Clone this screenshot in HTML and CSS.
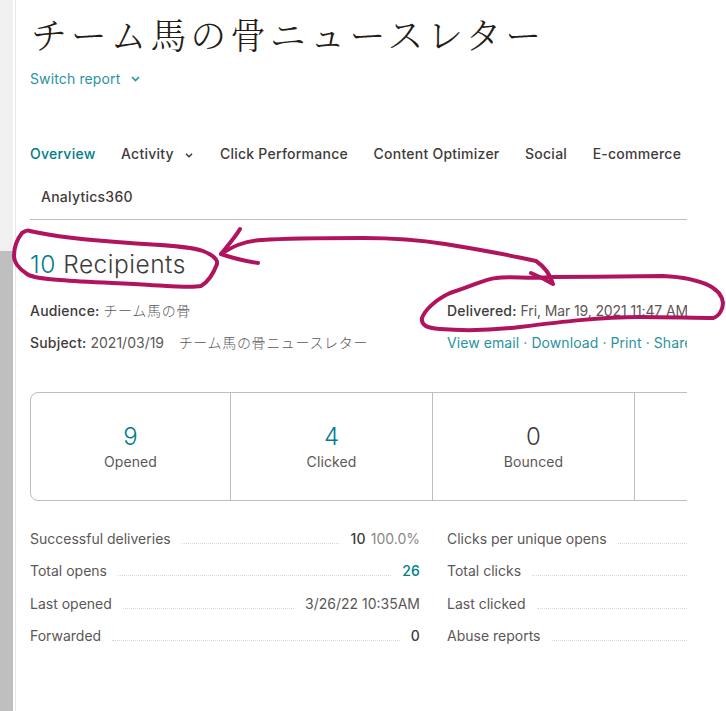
FILE: index.html
```html
<!DOCTYPE html>
<html lang="ja">
<head>
<meta charset="utf-8">
<title>Report</title>
<link rel="stylesheet" href="styles.css">
</head>
<body>
<div class="page">
  <aside class="rail"><div class="rail-top"></div><div class="rail-bottom"></div></aside>
  <main class="main">
    <h1 class="title">チーム馬の骨ニュースレター</h1>
    <a class="switch">Switch report
      <svg class="chev" width="9" height="6" viewBox="0 0 9 6"><path d="M1 1l3.5 3.5L8 1" fill="none" stroke="currentColor" stroke-width="1.7"/></svg>
    </a>
    <nav class="tabs">
      <a class="tab active">Overview</a>
      <a class="tab tab-menu">Activity <svg class="chev-s" width="8" height="5" viewBox="0 0 8 5"><path d="M1 .8l3 3 3-3" fill="none" stroke="currentColor" stroke-width="1.5"/></svg></a>
      <a class="tab">Click Performance</a>
      <a class="tab">Content Optimizer</a>
      <a class="tab">Social</a>
      <a class="tab tab-end">E-commerce</a>
      <a class="tab tab-wrap">Analytics360</a>
    </nav>
    <h2 class="recipients"><span class="teal">10</span> Recipients</h2>
    <div class="meta">
      <div class="meta-row">
        <p><b>Audience:</b> <span class="jp">チーム馬の骨</span></p>
        <p class="meta-right"><b>Delivered:</b> <span class="date">Fri, Mar 19, 2021 11:47 AM</span></p>
      </div>
      <div class="meta-row">
        <p><b>Subject:</b> 2021/03/19<span class="jp">　チーム馬の骨ニュースレター</span></p>
        <p class="meta-right links"><a>View email</a> · <a>Download</a> · <a>Print</a> · <a>Share</a></p>
      </div>
    </div>
    <section class="stats">
      <div class="stat"><strong class="teal">9</strong><span>Opened</span></div>
      <div class="stat"><strong class="teal">4</strong><span>Clicked</span></div>
      <div class="stat"><strong>0</strong><span>Bounced</span></div>
      <div class="stat"></div>
    </section>
    <section class="details">
      <div class="col">
        <div class="row"><span>Successful deliveries</span><i></i><b>10</b><em>100.0%</em></div>
        <div class="row"><span>Total opens</span><i></i><b class="teal">26</b></div>
        <div class="row"><span>Last opened</span><i></i><span>3/26/22 10:35AM</span></div>
        <div class="row"><span>Forwarded</span><i></i><b>0</b></div>
      </div>
      <div class="col col-right">
        <div class="row"><span>Clicks per unique opens</span><i></i></div>
        <div class="row"><span>Total clicks</span><i></i></div>
        <div class="row"><span>Last clicked</span><i></i></div>
        <div class="row"><span>Abuse reports</span><i></i></div>
      </div>
    </section>
  </main>
  <svg class="ink" width="726" height="711" viewBox="0 0 726 711" fill="none" stroke="#b0145f" stroke-width="4" stroke-linecap="round" stroke-linejoin="round">
    <path d="M30 231C60 238 100 241 130 243C160 245 190 246 203 251C213 255 218 259 217 264C214 272 208 282 201 286C190 288 170 286 150 285C115 283 85 282 60 280C45 279 33 278 27 274C19 269 14 262 14 256C14 247 18 238 22 233C25 231 28 230 30 231Z"/>
    <path d="M240 229C236 236 230 243 221 254C232 258 246 261 258 263"/>
    <path d="M221 254C232 247 243 241 262 240C290 238 330 238 363 238C390 238 420 240 445 244C470 248 495 252 536 261C545 267 550 274 553 284C546 280 538 276 531 273"/>
    <path d="M553 277C530 279 510 276 496 278C485 279 475 285 450 293C435 300 425 310 422 318C421 325 426 328 440 329C465 331 495 330 520 327C560 322 600 317 640 317C665 317 695 318 713 318C720 316 723 308 723 303C722 295 718 291 710 286C700 281 685 277 663 276C625 276 590 277 553 277Z"/>
  </svg>
</div>
</body>
</html>
```

FILE: styles.css
```css
* { box-sizing: border-box; }
html, body { margin: 0; padding: 0; background: #fff; }
body { font-family: "Inter", "Noto Sans CJK JP", sans-serif; color: #403b3b; font-size: 14px; overflow: hidden; }
p, h1, h2 { margin: 0; font-weight: 400; }
.page { display: flex; width: 726px; height: 711px; overflow: hidden; position: relative; }
.rail { width: 16px; flex: none; display: flex; flex-direction: column; border-right: 1px solid #e6e6e6; padding-right: 2px; }
.rail-top { height: 251px; background: #f0f0f0; }
.rail-bottom { flex: 1; background: #bfbfbf; }
.main { width: 671px; flex: none; padding-left: 14px; overflow: hidden; }
.teal { color: #007c89; }
.title { font-family: "Noto Serif CJK JP", "Noto Sans CJK JP", serif; font-size: 36px; font-weight: 300; letter-spacing: 3.8px; line-height: 50px; margin-top: 9px; color: #241c15; white-space: nowrap; margin-left: 1px; }
.switch { display: flex; align-items: center; gap: 11px; color: #2a939e; font-size: 14px; letter-spacing: .13px; line-height: 20px; margin-top: 10px; }
.tabs { display: flex; flex-wrap: wrap; margin-top: 55px; border-bottom: 1px solid #bdbdbd; height: 76px; width: 657px; font-weight: 500; letter-spacing: .25px; color: #403b3b; }
.tab { line-height: 20px; height: 43px; margin-right: 25.5px; white-space: nowrap; }
.tab.active { color: #007c89; }
.tab-menu { margin-right: 27px; }
.tab-end { margin-right: 0; }
.chev-s { margin-left: 7px; vertical-align: 1px; }
.tab-wrap { margin-left: 11px; }
.recipients { font-size: 24.5px; font-weight: 300; letter-spacing: .5px; line-height: 32px; margin-top: 28px; color: #403b3b; }
.meta { margin-top: 21px; }
.meta-row { display: flex; line-height: 20px; height: 32px; white-space: nowrap; color: #5c5757; }
.meta-row p:first-child { width: 417px; flex: none; }
.meta-row b { font-weight: 500; letter-spacing: .2px; color: #403b3b; }
.jp { letter-spacing: .65px; font-weight: 300; }
.date { letter-spacing: -.12px; }
.meta-right { overflow: hidden; width: 240px; }
.links { letter-spacing: .08px; }
.links, .links a { color: #2a939e; }
.stats { display: flex; margin-top: 27px; width: 720px; height: 109px; border: 1px solid #bdbdbd; border-radius: 8px; }
.stat { width: 202px; flex: none; display: flex; flex-direction: column; align-items: center; padding-top: 29px; border-right: 1px solid #bdbdbd; color: #5c5757; }
.stat:first-child { width: 200px; }
.stat strong { font-size: 24px; line-height: 30px; font-weight: 300; }
.stat strong:not(.teal) { color: #403b3b; }
.stat span { line-height: 20px; letter-spacing: .1px; }
.details { display: flex; margin-top: 28px; width: 657px; }
.col { width: 390px; flex: none; }
.col-right { width: 240px; margin-left: 27px; }
.row { display: flex; align-items: baseline; height: 32.3px; line-height: 20px; color: #5c5757; white-space: nowrap; }
.row i { flex: 1; border-bottom: 1px dotted #d6d6d6; margin: 0 11px; }
.row b { font-weight: 500; letter-spacing: .2px; color: #403b3b; }
.row b.teal { color: #007c89; }
.row em { font-style: normal; color: #8a8686; margin-left: 5px; }
.col-right .row i { margin-right: 0; }
.ink { position: absolute; left: 0; top: 0; pointer-events: none; }
```
